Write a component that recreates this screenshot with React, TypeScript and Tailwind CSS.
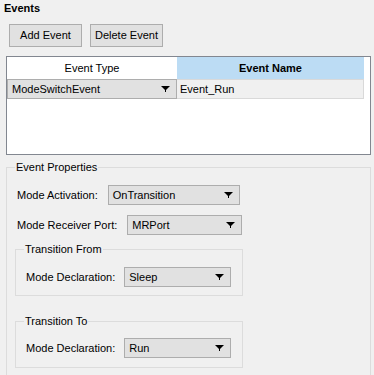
import React from "react"

function Arrow() {
  return (
    <svg width="9" height="6" viewBox="0 0 9 6" className="shrink-0">
      <polygon points="0,0 9,0 4.5,4.5" fill="#000" />
      <rect x="4" y="4" width="1" height="2" fill="#000" />
    </svg>
  )
}

function Combo({ value, width }: { value: string; width: string }) {
  return (
    <div
      className={`${width} h-[20px] flex items-center justify-between bg-[#e1e1e1] border border-[#adadad] pl-[4px] pr-[6px]`}
    >
      <span>{value}</span>
      <Arrow />
    </div>
  )
}

function Field({ label, value, width, gap }: { label: string; value: string; width: string; gap: string }) {
  return (
    <div className={`flex items-center h-[20px] ml-[2px] ${gap}`}>
      <span className="shrink-0">{label}</span>
      <Combo value={value} width={width} />
    </div>
  )
}

function Group({ title, children, className }: { title: string; children: React.ReactNode; className?: string }) {
  return (
    <fieldset className={`border border-[#dcdcdc] pl-[8px] ${className ?? ""}`}>
      <legend className="px-[1px] leading-[14px]">{title}</legend>
      {children}
    </fieldset>
  )
}

export default function App() {
  return (
    <div
      className="w-[374px] h-[375px] overflow-hidden bg-[#f0f0f0] text-[11px] text-black"
      style={{ fontFamily: '"Liberation Sans", Arial, sans-serif' }}
    >
      <div className="pl-[4px] pt-[1px] h-[14px] leading-[14px] font-bold">Events</div>

      <div className="flex gap-[8px] pl-[9px] mt-[10px]">
        <button className="w-[73px] h-[23px] bg-[#e1e1e1] border border-[#adadad]">Add Event</button>
        <button className="w-[73px] h-[23px] bg-[#e1e1e1] border border-[#adadad]">Delete Event</button>
      </div>

      <div className="ml-[6px] mt-[9px] w-[365px] h-[99px] border border-[#828790] bg-white">
        <div className="flex h-[22px]">
          <div className="w-[170px] flex items-center justify-center bg-white">Event Type</div>
          <div className="w-[187px] flex items-center justify-center bg-[#bcdcf4] font-bold">Event Name</div>
        </div>
        <div className="flex h-[20px]">
          <Combo value="ModeSwitchEvent" width="w-[170px]" />
          <div className="w-[187px] flex items-center pl-[3px] bg-[#f0f0f0] border-y border-r border-[#d9d9d9]">
            Event_Run
          </div>
        </div>
      </div>

      <Group title="Event Properties" className="ml-[6px] mt-[5px] w-[365px] h-[230px]">
        <div className="mt-[11px] flex flex-col gap-[10px]">
          <Field label="Mode Activation:" value="OnTransition" width="w-[132px]" gap="gap-[10px]" />
          <Field label="Mode Receiver Port:" value="MRPort" width="w-[115px]" gap="gap-[10px]" />
        </div>

        <Group title="Transition From" className="mt-[7px] w-[228px] pb-[8px]">
          <div className="mt-[11px]">
            <Field label="Mode Declaration:" value="Sleep" width="w-[107px]" gap="gap-[9px]" />
          </div>
        </Group>

        <Group title="Transition To" className="mt-[18px] w-[228px] pb-[9px]">
          <div className="mt-[10px]">
            <Field label="Mode Declaration:" value="Run" width="w-[107px]" gap="gap-[9px]" />
          </div>
        </Group>
      </Group>
    </div>
  )
}
